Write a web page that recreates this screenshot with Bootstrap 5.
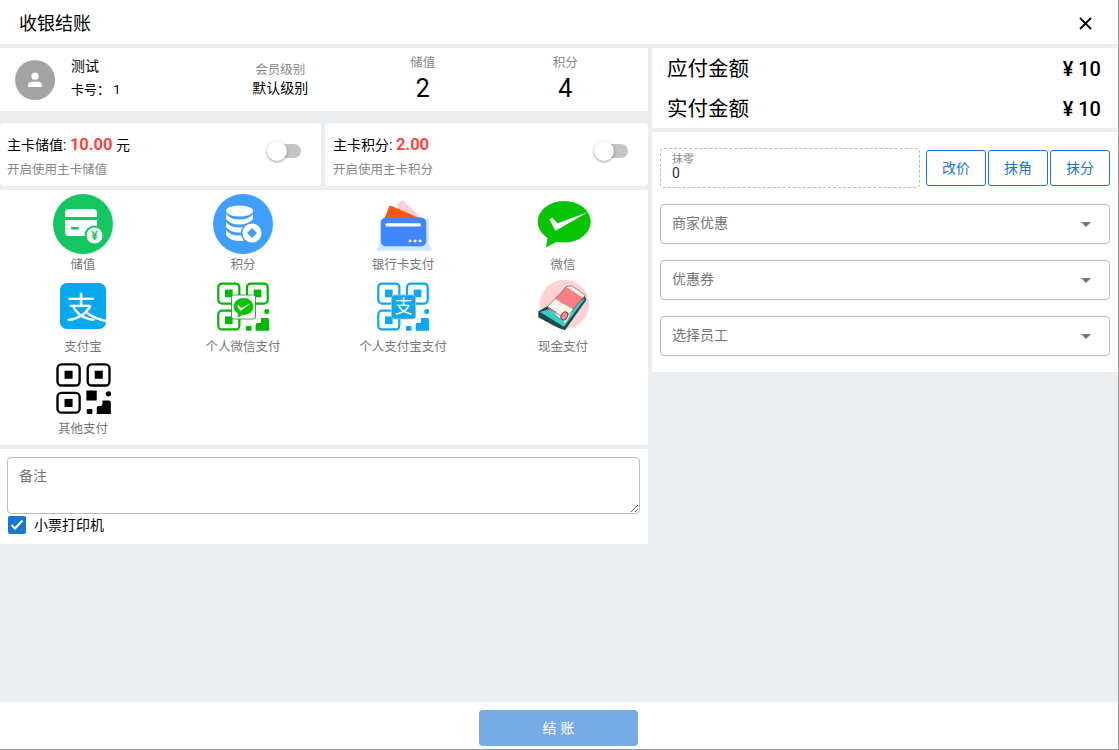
<!DOCTYPE html>
<html lang="zh-CN">
<head>
  <meta charset="UTF-8" />
  <meta name="viewport" content="width=device-width, initial-scale=1.0"/>
  <title>收银结账</title>
  <link href="https://cdn.jsdelivr.net/npm/bootstrap@5.3.0/dist/css/bootstrap.min.css" rel="stylesheet"/>
  <style>
    html, body { height: 100%; }
    body {
      font-family: Roboto, "Noto Sans CJK SC", sans-serif;
      font-size: 14px;
      color: #000;
      background: #ebeef1;
    }
    .pos-shell {
      width: 1119px;
      height: 750px;
      border-right: 1px solid #999;
      border-bottom: 1px solid #999;
    }
    .pos-header { height: 44px; padding: 2px 26px 0 19px; font-size: 18px; }
    .pos-main { height: 658px; padding-top: 4px; gap: 4px; }
    .col-left { width: 648px; }
    .col-right { width: 466px; }
    .pos-footer { height: 47px; padding: 8px 1px 0 0; }

    .member-panel { height: 63px; margin-bottom: 12px; }
    .member-info { width: 209px; padding-left: 15px; gap: 16px; }
    .member-avatar { width: 40px; height: 40px; background: #a3a3a3; }
    .member-name { font-size: 13px; line-height: 23px; margin-top: -4px; }
    .member-name-main { font-size: 14px; }
    .member-stat { width: 142.5px; }
    .member-stat.top-align { align-self: flex-start; padding-top: 7px; }
    .stat-label { font-size: 12.5px; color: #888; line-height: 16px; }
    .stat-level { font-size: 14px; line-height: 20px; }
    .stat-num { font-size: 25px; line-height: 32px; margin-top: 2px; }

    .balance-row { gap: 4px; margin-bottom: 4px; }
    .balance-card { width: 321px; height: 63px; padding: 10px 20px 0 7px; border-radius: 4px; }
    .balance-card.second { width: 323px; padding-left: 8px; }
    .balance-title { font-size: 14px; line-height: 24px; }
    .balance-money { font-size: 16.5px; font-weight: 700; color: #f44; }
    .balance-sub { font-size: 12.5px; color: #888; line-height: 24px; margin-top: 1px; }
    .pos-switch { position: relative; width: 24px; height: 14px; border-radius: 7px; background: #c4c4c4; margin-top: 11px; }
    .pos-switch::after {
      content: "";
      position: absolute;
      left: -10px;
      top: -3px;
      width: 20px;
      height: 20px;
      border-radius: 50%;
      background: #fff;
      box-shadow: 0 1px 3px rgba(0,0,0,.4);
    }

    .pay-grid {
      display: grid;
      grid-template-columns: repeat(4, 160px);
      grid-auto-rows: 82px;
      padding: 4px 5px 5px 3px;
      margin-bottom: 4px;
    }
    .pay-icon { height: 60px; }
    .pay-label { font-size: 12.5px; line-height: 20px; color: #777; margin-top: 1px; }

    .remark-panel { height: 95px; padding: 8px 8px 0 7px; }
    .remark-input.form-control {
      height: 57px;
      padding: 8px 11px;
      font-size: 14px;
      border-color: #bbb;
      border-radius: 4px;
    }
    .remark-input::placeholder { color: #777; }
    .print-check { gap: 8px; font-size: 14px; line-height: 18px; margin-top: 2px; padding-left: 1px; }
    .print-box { width: 18px; height: 18px; background: #1976d2; border-radius: 2px; }

    .total-panel { height: 80px; padding: 1px 17px 0 15px; margin-bottom: 4px; }
    .total-row { height: 40px; font-size: 20px; }
    .total-name { font-size: 20.5px; }
    .total-value { font-weight: 500; }

    .form-panel { height: 240px; padding: 16px 8px 0; }
    .wipe-row { height: 40px; margin-bottom: 16px; gap: 2px; }
    .wipe-box {
      width: 260px;
      height: 40px;
      margin-right: 4px;
      border: 1px dashed #bbb;
      border-radius: 4px;
      padding: 4px 11px;
    }
    .wipe-label { font-size: 11px; line-height: 13px; color: #888; }
    .wipe-value { font-size: 14px; line-height: 15px; color: #333; }
    .wipe-btn.btn {
      width: 60px;
      height: 36px;
      padding: 0;
      font-size: 14px;
      color: #1976d2;
      border-color: #1976d2;
      border-radius: 3px;
    }
    .pick-box {
      height: 40px;
      margin-bottom: 16px;
      padding: 0 18px 2px 11px;
      border: 1px solid #bbb;
      border-radius: 4px;
      font-size: 14px;
      color: #777;
    }
    .pick-arrow { border: 5px solid transparent; border-top-color: #777; border-bottom-width: 0; margin-top: 2px; }

    .pay-btn.btn {
      width: 159px;
      height: 36px;
      padding: 0 0 0 4px;
      font-size: 14px;
      letter-spacing: 4px;
      color: #fff;
      background: #77abe6;
      border: 0;
      border-radius: 4px;
    }
    .qr-green { color: #00b800; }
    .qr-blue { color: #0aa8ee; }
    .qr-black { color: #000; }
  </style>
</head>
<body>

<svg width="0" height="0" class="d-block">
  <defs>
    <symbol id="qrBase" viewBox="0 0 163 152">
      <g fill="none" stroke="currentColor" stroke-width="7">
        <rect x="4" y="4" width="66" height="63" rx="12"/>
        <rect x="94" y="4" width="65" height="63" rx="12"/>
        <rect x="4" y="89" width="66" height="59" rx="12"/>
      </g>
      <g fill="currentColor">
        <rect x="25" y="23" width="24" height="24"/>
        <rect x="115" y="23" width="24" height="24"/>
        <rect x="25" y="107" width="24" height="24"/>
        <rect x="90" y="82" width="31" height="30" rx="2"/>
        <circle cx="156" cy="92" r="8"/>
        <rect x="91" y="137" width="17" height="15" rx="3"/>
        <path d="M138 112 H157 Q163 112 163 118 V152 H121 V134 Q121 128 127 128 H132 Q138 128 138 122 Z"/>
      </g>
    </symbol>
  </defs>
</svg>

<div class="pos-shell d-flex flex-column">

  <!-- Header -->
  <div class="pos-header bg-white d-flex align-items-center justify-content-between">
    <span>收银结账</span>
    <svg width="13" height="13" viewBox="0 0 13 13"><path d="M1 1 12 12M12 1 1 12" stroke="#000" stroke-width="1.8"/></svg>
  </div>

  <div class="pos-main d-flex">
    <!-- Left column -->
    <div class="col-left">
      <div class="member-panel bg-white d-flex align-items-center">
        <div class="member-info d-flex align-items-center">
          <div class="member-avatar rounded-circle d-flex align-items-center justify-content-center">
            <svg width="16" height="16" viewBox="0 0 16 16"><circle cx="8" cy="4.2" r="3.6" fill="#fff"/><path d="M1 15 V13 Q1 9.5 8 9.5 Q15 9.5 15 13 V15 Z" fill="#fff"/></svg>
          </div>
          <div class="member-name">
            <div class="member-name-main">测试</div>
            <div>卡号： 1</div>
          </div>
        </div>
        <div class="member-stat text-center">
          <div class="stat-label">会员级别</div>
          <div class="stat-level">默认级别</div>
        </div>
        <div class="member-stat top-align text-center">
          <div class="stat-label">储值</div>
          <div class="stat-num">2</div>
        </div>
        <div class="member-stat top-align text-center">
          <div class="stat-label">积分</div>
          <div class="stat-num">4</div>
        </div>
      </div>

      <div class="balance-row d-flex">
        <div class="balance-card bg-white d-flex justify-content-between">
          <div>
            <div class="balance-title">主卡储值: <span class="balance-money">10.00</span> 元</div>
            <div class="balance-sub">开启使用主卡储值</div>
          </div>
          <div class="pos-switch"></div>
        </div>
        <div class="balance-card second bg-white d-flex justify-content-between">
          <div>
            <div class="balance-title">主卡积分: <span class="balance-money">2.00</span></div>
            <div class="balance-sub">开启使用主卡积分</div>
          </div>
          <div class="pos-switch"></div>
        </div>
      </div>

      <!-- Payment methods -->
      <div class="pay-grid bg-white">
        <div class="text-center">
          <div class="pay-icon d-flex align-items-center justify-content-center">
            <svg width="60" height="60" viewBox="0 0 60 60">
              <circle cx="30" cy="30" r="30" fill="#13c65f"/>
              <rect x="12" y="15" width="32" height="27" rx="4" fill="#fff"/>
              <rect x="12" y="23" width="32" height="3" fill="#13c65f"/>
              <rect x="18" y="33" width="8" height="2.5" rx="1" fill="#13c65f"/>
              <circle cx="41.5" cy="41.5" r="10" fill="#13c65f"/>
              <circle cx="41.5" cy="41.5" r="8" fill="#fff"/>
              <text x="41.5" y="46" text-anchor="middle" font-size="12" font-weight="700" fill="#13c65f" font-family="Roboto">¥</text>
            </svg>
          </div>
          <div class="pay-label">储值</div>
        </div>
        <div class="text-center">
          <div class="pay-icon d-flex align-items-center justify-content-center">
            <svg width="60" height="60" viewBox="0 0 60 60">
              <circle cx="30" cy="30" r="30" fill="#409eff"/>
              <g fill="#fff">
                <ellipse cx="26.500" cy="17" rx="13.500" ry="5.500"/>
                <path d="M13 20 Q17 25.500 26.500 25.500 T40 20 V25 Q36 30.500 26.500 30.500 T13 25 Z"/>
                <path d="M13 28 Q17 33.500 26.500 33.500 T40 28 V33 Q36 38.500 26.500 38.500 T13 33 Z"/>
                <path d="M13 36 Q17 41.500 26.500 41.500 Q30 41.500 31 41 L33 46 Q30 47 26.500 47 Q17 47 13 41 Z"/>
              </g>
              <circle cx="39" cy="39" r="11" fill="#409eff"/>
              <circle cx="39" cy="39" r="9.500" fill="#fff"/>
              <path d="M39 34 44 39 39 44 34 39 Z" fill="#409eff"/>
            </svg>
          </div>
          <div class="pay-label">积分</div>
        </div>
        <div class="text-center">
          <div class="pay-icon d-flex align-items-center justify-content-center">
            <svg width="57" height="53" viewBox="160 22 172 158">
              <path d="M225 40 243 28 305 85 240 85Z" fill="#ffd0d3"/>
              <path d="M190 78 203 47 Q206 43 212 46 L295 82 290 90 190 90Z" fill="#fa5514"/>
              <path d="M165 175 178 150 H316 L331 175 Q331 180 325 180 H171 Q165 180 165 175Z" fill="#d6e5ff"/>
              <path d="M315 80 H322 V165 H315Z" fill="#d6e5ff"/>
              <rect x="177" y="80" width="138" height="87" rx="16" fill="#4086ff"/>
              <rect x="192" y="97" width="106" height="10" rx="3" fill="#fff"/>
              <g fill="#fff"><circle cx="266" cy="151" r="4.500"/><circle cx="281" cy="151" r="4.500"/><circle cx="296" cy="151" r="4.500"/></g>
            </svg>
          </div>
          <div class="pay-label">银行卡支付</div>
        </div>
        <div class="text-center">
          <div class="pay-icon d-flex align-items-center justify-content-center">
            <svg width="55" height="47" viewBox="650 35 164 140">
              <ellipse cx="734" cy="97" rx="79" ry="62" fill="#07c400"/>
              <path d="M684 145 680 173 715 155Z" fill="#07c400"/>
              <path d="M690 90 708 124 806 68 714 101 698 84Z" fill="#fff"/>
            </svg>
          </div>
          <div class="pay-label">微信</div>
        </div>
        <div class="text-center">
          <div class="pay-icon d-flex align-items-center justify-content-center">
            <svg width="46" height="46" viewBox="0 0 46 46">
              <rect width="46" height="46" rx="7" fill="#06a9f0"/>
              <text x="21" y="35" text-anchor="middle" font-size="30" fill="#fff" font-family="Noto Sans CJK SC">支</text>
              <path d="M27 30 Q36 36 46 38" fill="none" stroke="#fff" stroke-width="2.500"/>
            </svg>
          </div>
          <div class="pay-label">支付宝</div>
        </div>
        <div class="text-center">
          <div class="pay-icon d-flex align-items-center justify-content-center">
            <svg width="52" height="49" viewBox="0 0 52 49">
              <use href="#qrBase" width="52" height="49" class="qr-green"/>
              <rect x="14.500" y="13" width="24" height="24" rx="2" fill="#fff" stroke="#1c8a34" stroke-width=".8"/>
              <ellipse cx="26.500" cy="24.500" rx="10" ry="8.500" fill="#07c400"/>
              <path d="M21 31 20.500 35.500 26 33Z" fill="#07c400"/>
              <path d="M20 24 23.500 29 34 21 24 26 21.500 23Z" fill="#fff"/>
            </svg>
          </div>
          <div class="pay-label">个人微信支付</div>
        </div>
        <div class="text-center">
          <div class="pay-icon d-flex align-items-center justify-content-center">
            <svg width="52" height="49" viewBox="0 0 52 49">
              <use href="#qrBase" width="52" height="49" class="qr-blue"/>
              <rect x="14.500" y="13" width="24" height="24" rx="3" fill="#0aa8ee" stroke="#bbb" stroke-width=".8"/>
              <text x="26.500" y="31" text-anchor="middle" font-size="18" fill="#fff" font-family="Noto Sans CJK SC">支</text>
            </svg>
          </div>
          <div class="pay-label">个人支付宝支付</div>
        </div>
        <div class="text-center">
          <div class="pay-icon d-flex align-items-center justify-content-center">
            <svg width="65" height="60" viewBox="3 0 195 180">
              <circle cx="103" cy="85" r="74" fill="#ffd3d3"/>
              <path d="M25 106 70 80 165 60 169 72 105 163 Q90 160 25 124Z" fill="#1f4a4c"/>
              <path d="M30 108 165 68 102 152Z" fill="#38cfc2"/>
              <path d="M52 92 75 68 130 100 106 142Z" fill="#fff3ea"/>
              <path d="M75 68 Q95 50 108 32 L165 62 Q145 80 130 100Z" fill="#f77f82"/>
              <path d="M108 32 125 29 166 56 160 66Z" fill="#fbeeee"/>
              <path d="M75 68 Q95 50 108 32 L125 29 166 58 Q145 80 130 100 106 142 52 92Z" fill="none" stroke="#2a2a2a" stroke-width="1.500"/>
              <path d="M56 96 78 110" stroke="#ec4fa0" stroke-width="5"/>
              <ellipse cx="103" cy="120" rx="9" ry="13" transform="rotate(30 103 120)" fill="#f78d90" stroke="#7a3b47" stroke-width="3"/>
            </svg>
          </div>
          <div class="pay-label">现金支付</div>
        </div>
        <div class="text-center">
          <div class="pay-icon d-flex align-items-center justify-content-center">
            <svg width="55" height="51" class="qr-black"><use href="#qrBase" width="55" height="51"/></svg>
          </div>
          <div class="pay-label">其他支付</div>
        </div>
      </div>

      <!-- Remark -->
      <div class="remark-panel bg-white">
        <textarea class="remark-input form-control" placeholder="备注"></textarea>
        <div class="print-check d-flex align-items-center">
          <span class="print-box d-flex align-items-center justify-content-center">
            <svg width="14" height="12" viewBox="0 0 14 12"><path d="M1.500 6 5 9.500 12.500 1.500" fill="none" stroke="#fff" stroke-width="2"/></svg>
          </span>
          <span>小票打印机</span>
        </div>
      </div>
    </div>

    <!-- Right column -->
    <div class="col-right">
      <div class="total-panel bg-white">
        <div class="total-row d-flex align-items-center justify-content-between">
          <span class="total-name">应付金额</span><span class="total-value">¥ 10</span>
        </div>
        <div class="total-row d-flex align-items-center justify-content-between">
          <span class="total-name">实付金额</span><span class="total-value">¥ 10</span>
        </div>
      </div>
      <div class="form-panel bg-white">
        <div class="wipe-row d-flex align-items-center">
          <div class="wipe-box">
            <div class="wipe-label">抹零</div>
            <div class="wipe-value">0</div>
          </div>
          <button type="button" class="wipe-btn btn bg-white">改价</button>
          <button type="button" class="wipe-btn btn bg-white">抹角</button>
          <button type="button" class="wipe-btn btn bg-white">抹分</button>
        </div>
        <div class="pick-box d-flex align-items-center justify-content-between"><span>商家优惠</span><span class="pick-arrow"></span></div>
        <div class="pick-box d-flex align-items-center justify-content-between"><span>优惠券</span><span class="pick-arrow"></span></div>
        <div class="pick-box d-flex align-items-center justify-content-between"><span>选择员工</span><span class="pick-arrow"></span></div>
      </div>
    </div>
  </div>

  <!-- Footer -->
  <div class="pos-footer bg-white text-center">
    <button type="button" class="pay-btn btn">结账</button>
  </div>
</div>

<script src="https://cdn.jsdelivr.net/npm/bootstrap@5.3.0/dist/js/bootstrap.bundle.min.js"></script>
</body>
</html>
